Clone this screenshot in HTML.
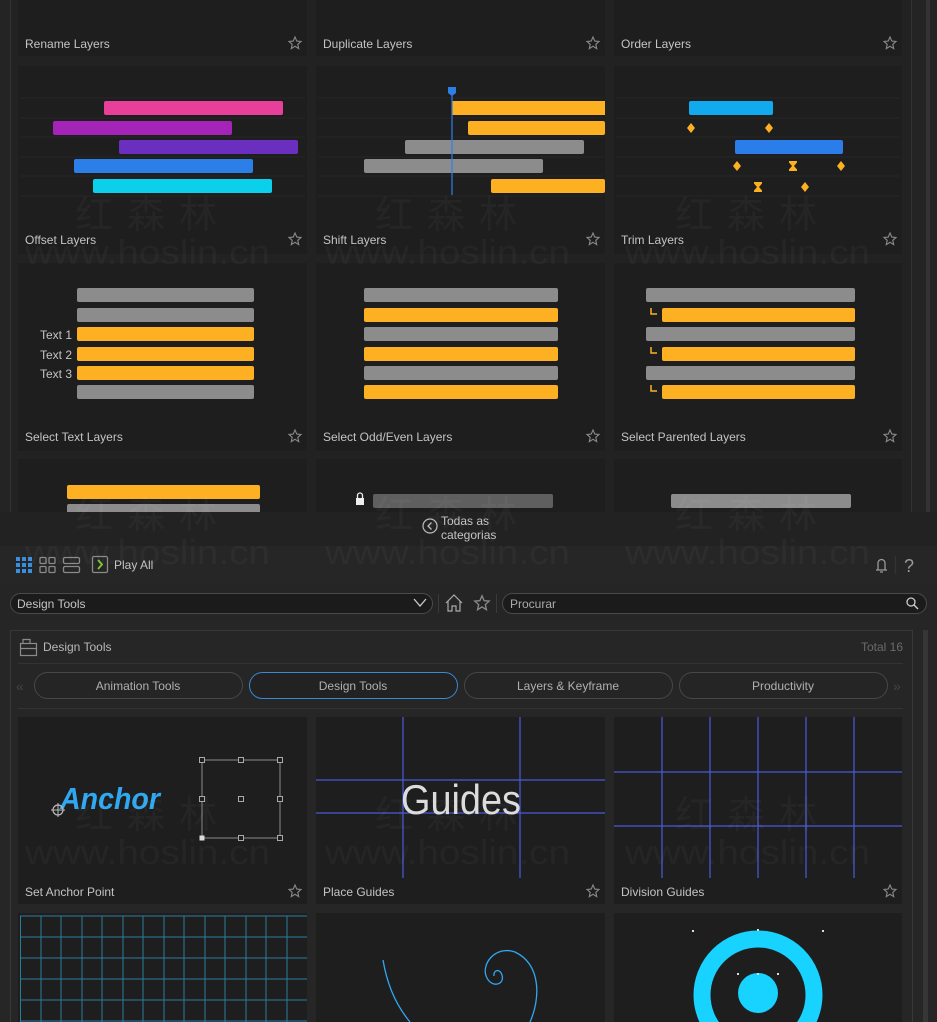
<!DOCTYPE html>
<html><head><meta charset="utf-8"><style>
html,body{margin:0;padding:0;background:#262626;width:937px;height:1022px;overflow:hidden}
svg{display:block}
text{font-family:"Liberation Sans","Noto Sans CJK SC",sans-serif}
</style></head><body>
<svg width="937" height="1022" viewBox="0 0 937 1022" xmlns="http://www.w3.org/2000/svg">
<defs>
<g id="star"><path d="M0,-6 L1.8,-1.9 6,-1.6 2.8,1.3 3.7,5.6 0,3.3 -3.7,5.6 -2.8,1.3 -6,-1.6 -1.8,-1.9Z" fill="none" stroke="#8a8a8a" stroke-width="1.1"/></g>
<g id="dia"><path d="M0,-5 L4,0 0,5 -4,0Z" fill="#fdb022"/></g>
<g id="hg"><path d="M-4,-5 H4 V-3.5 L1,0 4,3.5 V5 H-4 V3.5 L-1,0 -4,-3.5Z" fill="#fdb022"/></g>
</defs>
<rect x="0" y="0" width="937" height="512" fill="#242424"/>
<rect x="10" y="0" width="902" height="512" fill="#222"/>
<line x1="10.5" y1="0" x2="10.5" y2="512" stroke="#333"/>
<line x1="911.5" y1="0" x2="911.5" y2="512" stroke="#333"/>
<rect x="926" y="0" width="4" height="512" fill="#333"/>
<g fill="#1e1e1e">
<rect x="18" y="-135" width="289" height="191"/><rect x="316" y="-135" width="289" height="191"/><rect x="614" y="-135" width="288" height="191"/>
<rect x="18" y="66" width="289" height="188"/><rect x="316" y="66" width="289" height="188"/><rect x="614" y="66" width="288" height="188"/>
<rect x="18" y="263" width="289" height="188"/><rect x="316" y="263" width="289" height="188"/><rect x="614" y="263" width="288" height="188"/>
<rect x="18" y="459" width="289" height="60"/><rect x="316" y="459" width="289" height="60"/><rect x="614" y="459" width="288" height="60"/>
</g>
<g stroke="#262626" stroke-width="1">
<line x1="20" y1="98" x2="305" y2="98"/><line x1="20" y1="118" x2="305" y2="118"/><line x1="20" y1="137" x2="305" y2="137"/><line x1="20" y1="157" x2="305" y2="157"/><line x1="20" y1="176" x2="305" y2="176"/><line x1="20" y1="196" x2="305" y2="196"/>
<line x1="318" y1="98" x2="603" y2="98"/><line x1="318" y1="118" x2="603" y2="118"/><line x1="318" y1="137" x2="603" y2="137"/><line x1="318" y1="157" x2="603" y2="157"/><line x1="318" y1="176" x2="603" y2="176"/><line x1="318" y1="196" x2="603" y2="196"/>
<line x1="616" y1="98" x2="900" y2="98"/><line x1="616" y1="118" x2="900" y2="118"/><line x1="616" y1="137" x2="900" y2="137"/><line x1="616" y1="157" x2="900" y2="157"/><line x1="616" y1="176" x2="900" y2="176"/><line x1="616" y1="196" x2="900" y2="196"/>
</g>
<g font-size="12" fill="#c4c4c4">
<text x="25" y="48">Rename Layers</text><text x="323" y="48">Duplicate Layers</text><text x="621" y="48">Order Layers</text>
<text x="25" y="244">Offset Layers</text><text x="323" y="244">Shift Layers</text><text x="621" y="244">Trim Layers</text>
<text x="25" y="441">Select Text Layers</text><text x="323" y="441">Select Odd/Even Layers</text><text x="621" y="441">Select Parented Layers</text>
</g>
<use href="#star" x="295" y="43"/><use href="#star" x="593" y="43"/><use href="#star" x="890" y="43"/>
<use href="#star" x="295" y="239"/><use href="#star" x="593" y="239"/><use href="#star" x="890" y="239"/>
<use href="#star" x="295" y="436"/><use href="#star" x="593" y="436"/><use href="#star" x="890" y="436"/>
<rect x="104" y="101" width="179" height="14" rx="2" fill="#e8409a"/>
<rect x="53" y="121" width="179" height="14" rx="2" fill="#a424b8"/>
<rect x="119" y="140" width="179" height="14" rx="2" fill="#6a2fbf"/>
<rect x="74" y="159" width="179" height="14" rx="2" fill="#2d7fe8"/>
<rect x="93" y="179" width="179" height="14" rx="2" fill="#0ad0ec"/>
<rect x="452" y="101" width="153" height="14" fill="#fdb022"/>
<rect x="468" y="121" width="137" height="14" rx="2" fill="#fdb022"/>
<rect x="405" y="140" width="179" height="14" rx="2" fill="#8c8c8c"/>
<rect x="364" y="159" width="179" height="14" rx="2" fill="#8c8c8c"/>
<rect x="491" y="179" width="114" height="14" rx="2" fill="#fdb022"/>
<line x1="452" y1="92" x2="452" y2="195" stroke="#2d7fe8" stroke-width="1.2"/>
<path d="M448,87 H456 V93 L452,96 448,93Z" fill="#2d7fe8"/>
<rect x="689" y="101" width="84" height="14" rx="2" fill="#12aaee"/>
<rect x="735" y="140" width="108" height="14" rx="2" fill="#2b7de9"/>
<use href="#dia" x="691" y="128"/><use href="#dia" x="769" y="128"/>
<use href="#dia" x="737" y="166"/><use href="#hg" x="793" y="166"/><use href="#dia" x="841" y="166"/>
<use href="#hg" x="758" y="187"/><use href="#dia" x="805" y="187"/>
<g>
<rect x="77" y="288" width="177" height="14" rx="2" fill="#8c8c8c"/>
<rect x="77" y="308" width="177" height="14" rx="2" fill="#8c8c8c"/>
<rect x="77" y="327" width="177" height="14" rx="2" fill="#fdb022"/>
<rect x="77" y="347" width="177" height="14" rx="2" fill="#fdb022"/>
<rect x="77" y="366" width="177" height="14" rx="2" fill="#fdb022"/>
<rect x="77" y="385" width="177" height="14" rx="2" fill="#8c8c8c"/>
<g font-size="12" fill="#c4c4c4"><text x="40" y="339">Text 1</text><text x="40" y="359">Text 2</text><text x="40" y="378">Text 3</text></g>
</g>
<g>
<rect x="364" y="288" width="194" height="14" rx="2" fill="#8c8c8c"/>
<rect x="364" y="308" width="194" height="14" rx="2" fill="#fdb022"/>
<rect x="364" y="327" width="194" height="14" rx="2" fill="#8c8c8c"/>
<rect x="364" y="347" width="194" height="14" rx="2" fill="#fdb022"/>
<rect x="364" y="366" width="194" height="14" rx="2" fill="#8c8c8c"/>
<rect x="364" y="385" width="194" height="14" rx="2" fill="#fdb022"/>
</g>
<g>
<rect x="646" y="288" width="209" height="14" rx="2" fill="#8c8c8c"/>
<rect x="662" y="308" width="193" height="14" rx="2" fill="#fdb022"/>
<rect x="646" y="327" width="209" height="14" rx="2" fill="#8c8c8c"/>
<rect x="662" y="347" width="193" height="14" rx="2" fill="#fdb022"/>
<rect x="646" y="366" width="209" height="14" rx="2" fill="#8c8c8c"/>
<rect x="662" y="385" width="193" height="14" rx="2" fill="#fdb022"/>
<path d="M651,308 V314 H657 M651,347 V353 H657 M651,385 V391 H657" stroke="#fdb022" stroke-width="1.5" fill="none"/>
</g>
<rect x="67" y="485" width="193" height="14" rx="2" fill="#fdb022"/>
<rect x="67" y="504" width="193" height="14" rx="2" fill="#8c8c8c"/>
<rect x="373" y="494" width="180" height="14" rx="2" fill="#5f5f5f"/>
<rect x="671" y="494" width="180" height="14" rx="2" fill="#8c8c8c"/>
<rect x="356" y="498" width="8" height="7" fill="#eee"/><path d="M357.5,498 V495.5 A2.5,2.5 0 0 1 362.5,495.5 V498" stroke="#eee" fill="none" stroke-width="1.3"/>
<rect x="0" y="512" width="937" height="510" fill="#262626"/>
<rect x="0" y="512" width="937" height="34" fill="#222"/>
<circle cx="430" cy="526" r="7" fill="none" stroke="#bbb" stroke-width="1.2"/><path d="M431.5,522.5 L428,526 431.5,529.5" stroke="#bbb" fill="none" stroke-width="1.3"/>
<text x="441" y="525" font-size="12" fill="#c4c4c4">Todas as</text>
<text x="441" y="539" font-size="12" fill="#c4c4c4">categorias</text>
<g fill="#3a8ee0"><rect x="16" y="557" width="4" height="4"/><rect x="22" y="557" width="4" height="4"/><rect x="28" y="557" width="4" height="4"/><rect x="16" y="563" width="4" height="4"/><rect x="22" y="563" width="4" height="4"/><rect x="28" y="563" width="4" height="4"/><rect x="16" y="569" width="4" height="4"/><rect x="22" y="569" width="4" height="4"/><rect x="28" y="569" width="4" height="4"/></g>
<g fill="none" stroke="#8a8a8a" stroke-width="1.3"><rect x="40" y="557.5" width="6" height="6" rx="1"/><rect x="49" y="557.5" width="6" height="6" rx="1"/><rect x="40" y="566.5" width="6" height="6" rx="1"/><rect x="49" y="566.5" width="6" height="6" rx="1"/>
<rect x="63.5" y="557.5" width="16" height="6" rx="1.5"/><rect x="63.5" y="566.5" width="16" height="6" rx="1.5"/>
<rect x="92.5" y="556.5" width="15" height="16" rx="1.5"/></g>
<path d="M98,560 L102,564.5 98,569" stroke="#7ec832" stroke-width="1.8" fill="none"/>
<text x="114" y="569" font-size="12" fill="#c4c4c4">Play All</text>
<g stroke="#9a9a9a" stroke-width="1.3" fill="none"><path d="M876,570 H887 M878,570 V563 A3.5,3.5 0 0 1 885,563 V570 M880,572 H883"/><line x1="895.5" y1="556" x2="895.5" y2="574" stroke="#333"/></g>
<text x="904" y="572" font-size="18" fill="#9a9a9a">?</text>
<rect x="0" y="584" width="937" height="38" fill="#252525"/>
<rect x="10.5" y="593.5" width="422" height="20" rx="10" fill="#1b1b1b" stroke="#4a4a4a"/>
<text x="17" y="608" font-size="12" fill="#c4c4c4">Design Tools</text>
<path d="M414,599 L420,606 426,599" stroke="#ccc" stroke-width="1.3" fill="none"/>
<line x1="438.5" y1="594" x2="438.5" y2="613" stroke="#3a3a3a"/>
<path d="M446,603 L454,595 462,603 M448,601 V611 H452 V606 H456 V611 H460 V601" stroke="#aaa" stroke-width="1.2" fill="none"/>
<use href="#star" x="482" y="603" transform="translate(-96.4 -120.6) scale(1.2)"/>
<line x1="496.5" y1="594" x2="496.5" y2="613" stroke="#3a3a3a"/>
<rect x="502.5" y="593.5" width="424" height="20" rx="10" fill="#1b1b1b" stroke="#4a4a4a"/>
<text x="510" y="608" font-size="12" fill="#aaa">Procurar</text>
<circle cx="911" cy="602" r="4" stroke="#ccc" stroke-width="1.3" fill="none"/><line x1="914" y1="605" x2="918" y2="609" stroke="#ccc" stroke-width="1.4"/>
<rect x="10.5" y="630.5" width="902" height="400" fill="#262626" stroke="#383838"/>
<rect x="923" y="630" width="5" height="392" fill="#363636"/>
<g fill="none" stroke="#8a8a8a" stroke-width="1.2"><rect x="20.5" y="643.5" width="16" height="12"/><path d="M23,643 V639.5 H30 V643 M20.5,648.5 H36.5"/></g>
<text x="43" y="651" font-size="12" fill="#b8b8b8">Design Tools</text>
<text x="903" y="651" font-size="12" fill="#6a6a6a" text-anchor="end">Total 16</text>
<line x1="18" y1="663.5" x2="903" y2="663.5" stroke="#333"/>
<text x="16" y="691" font-size="14" fill="#444">«</text><text x="893" y="691" font-size="14" fill="#444">»</text>
<g fill="#252525" stroke="#474747">
<rect x="34.5" y="672.5" width="208" height="26" rx="13"/><rect x="464.5" y="672.5" width="208" height="26" rx="13"/><rect x="679.5" y="672.5" width="208" height="26" rx="13"/>
</g>
<rect x="249.5" y="672.5" width="208" height="26" rx="13" fill="#222" stroke="#3a88d8"/>
<g font-size="12" fill="#b0b0b0" text-anchor="middle">
<text x="138" y="690">Animation Tools</text><text x="353" y="690">Design Tools</text><text x="568" y="690">Layers &amp; Keyframe</text><text x="783" y="690">Productivity</text>
</g>
<line x1="18" y1="708.5" x2="903" y2="708.5" stroke="#333"/>
<g fill="#1e1e1e">
<rect x="18" y="717" width="289" height="187"/><rect x="316" y="717" width="289" height="187"/><rect x="614" y="717" width="288" height="187"/>
<rect x="18" y="913" width="289" height="120"/><rect x="316" y="913" width="289" height="120"/><rect x="614" y="913" width="288" height="120"/>
</g>
<g font-size="12" fill="#c4c4c4"><text x="25" y="896">Set Anchor Point</text><text x="323" y="896">Place Guides</text><text x="621" y="896">Division Guides</text></g>
<use href="#star" x="295" y="891"/><use href="#star" x="593" y="891"/><use href="#star" x="890" y="891"/>
<text x="60" y="809" font-size="31" font-weight="bold" font-style="italic" fill="#2fa8f0" textLength="100" lengthAdjust="spacingAndGlyphs">Anchor</text>
<circle cx="58" cy="810" r="5" fill="none" stroke="#bbb" stroke-width="1.2"/><path d="M58,803 V817 M51,810 H65" stroke="#bbb" stroke-width="1"/>
<rect x="202" y="760" width="78" height="78" fill="none" stroke="#8a8a8a"/>
<g fill="#1e1e1e" stroke="#aaa"><rect x="199.5" y="757.5" width="5" height="5"/><rect x="238.5" y="757.5" width="5" height="5"/><rect x="277.5" y="757.5" width="5" height="5"/><rect x="199.5" y="796.5" width="5" height="5"/><rect x="238.5" y="796.5" width="5" height="5"/><rect x="277.5" y="796.5" width="5" height="5"/><rect x="238.5" y="835.5" width="5" height="5"/><rect x="277.5" y="835.5" width="5" height="5"/></g>
<rect x="199.5" y="835.5" width="5" height="5" fill="#ddd"/>
<g stroke="#4a5ad8" stroke-width="1.2"><line x1="403" y1="717" x2="403" y2="878"/><line x1="520" y1="717" x2="520" y2="878"/><line x1="316" y1="780" x2="605" y2="780"/><line x1="316" y1="813" x2="605" y2="813"/></g>
<text x="461" y="814" font-size="42" fill="#dcdcdc" text-anchor="middle" textLength="120" lengthAdjust="spacingAndGlyphs">Guides</text>
<g stroke="#4a5ad8" stroke-width="1.2"><line x1="662" y1="717" x2="662" y2="878"/><line x1="710" y1="717" x2="710" y2="878"/><line x1="758" y1="717" x2="758" y2="878"/><line x1="806" y1="717" x2="806" y2="878"/><line x1="854" y1="717" x2="854" y2="878"/><line x1="614" y1="772" x2="902" y2="772"/><line x1="614" y1="826" x2="902" y2="826"/></g>
<g stroke="#2a7c9c" stroke-width="1">
<line x1="20" y1="916" x2="307" y2="916"/><line x1="20" y1="937" x2="307" y2="937"/><line x1="20" y1="958" x2="307" y2="958"/><line x1="20" y1="979" x2="307" y2="979"/><line x1="20" y1="1000" x2="307" y2="1000"/><line x1="20" y1="1021" x2="307" y2="1021"/>
<line x1="20.5" y1="916" x2="20.5" y2="1022"/><line x1="41" y1="916" x2="41" y2="1022"/><line x1="61" y1="916" x2="61" y2="1022"/><line x1="82" y1="916" x2="82" y2="1022"/><line x1="102" y1="916" x2="102" y2="1022"/><line x1="123" y1="916" x2="123" y2="1022"/><line x1="143" y1="916" x2="143" y2="1022"/><line x1="164" y1="916" x2="164" y2="1022"/><line x1="184" y1="916" x2="184" y2="1022"/><line x1="205" y1="916" x2="205" y2="1022"/><line x1="225" y1="916" x2="225" y2="1022"/><line x1="246" y1="916" x2="246" y2="1022"/><line x1="266" y1="916" x2="266" y2="1022"/><line x1="287" y1="916" x2="287" y2="1022"/>
</g>
<path d="M383,960 C388,990 400,1010 410,1022 M530,1022 C540,1000 542,965 515,952 C495,945 480,965 487,978 C492,988 505,985 502,975 C500,968 493,970 494,976" stroke="#2fa8f0" stroke-width="1.3" fill="none"/>
<circle cx="758" cy="995" r="56" fill="none" stroke="#18d2ff" stroke-width="17"/>
<circle cx="758" cy="993" r="20" fill="#18d2ff"/>
<g fill="#ddd"><rect x="692" y="930" width="2" height="2"/><rect x="822" y="930" width="2" height="2"/><rect x="757" y="929" width="2" height="2"/><rect x="737" y="973" width="2" height="2"/><rect x="777" y="973" width="2" height="2"/><rect x="757" y="973" width="2" height="2"/></g>
<g fill="#fff" fill-opacity="0.035" font-size="38">
<text x="75" y="228" letter-spacing="14">红森林</text><text x="375" y="228" letter-spacing="14">红森林</text><text x="675" y="228" letter-spacing="14">红森林</text>
<text x="75" y="528" letter-spacing="14">红森林</text><text x="375" y="528" letter-spacing="14">红森林</text><text x="675" y="528" letter-spacing="14">红森林</text>
<text x="75" y="828" letter-spacing="14">红森林</text><text x="375" y="828" letter-spacing="14">红森林</text><text x="675" y="828" letter-spacing="14">红森林</text>
</g>
<g fill="#fff" fill-opacity="0.035" font-size="34">
<text x="25" y="264" textLength="245" lengthAdjust="spacingAndGlyphs">www.hoslin.cn</text><text x="325" y="264" textLength="245" lengthAdjust="spacingAndGlyphs">www.hoslin.cn</text><text x="625" y="264" textLength="245" lengthAdjust="spacingAndGlyphs">www.hoslin.cn</text>
<text x="25" y="564" textLength="245" lengthAdjust="spacingAndGlyphs">www.hoslin.cn</text><text x="325" y="564" textLength="245" lengthAdjust="spacingAndGlyphs">www.hoslin.cn</text><text x="625" y="564" textLength="245" lengthAdjust="spacingAndGlyphs">www.hoslin.cn</text>
<text x="25" y="864" textLength="245" lengthAdjust="spacingAndGlyphs">www.hoslin.cn</text><text x="325" y="864" textLength="245" lengthAdjust="spacingAndGlyphs">www.hoslin.cn</text><text x="625" y="864" textLength="245" lengthAdjust="spacingAndGlyphs">www.hoslin.cn</text>
</g>
</svg>
</body></html>
